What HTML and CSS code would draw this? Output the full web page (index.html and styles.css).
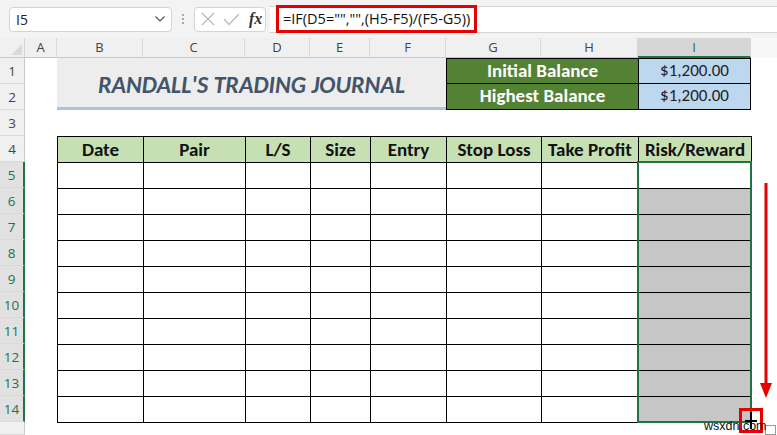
FILE: index.html
```html
<!DOCTYPE html>
<html>
	<head>
		<meta charset="UTF-8">
		<title>Randall's Trading Journal</title>
		<link rel="stylesheet" href="styles.css">
	</head>
	<body>
		<!-- formula bar -->
		<div class="toolbar">
			<div class="namebox">
				<span>I5</span>
				<svg width="10" height="6" viewBox="0 0 10 6"><polyline points="0.5,0.5 5,5 9.5,0.5" fill="none" stroke="#555" stroke-width="1.2"/></svg>
			</div>
			<div class="dots">
				<svg width="4" height="12" viewBox="0 0 4 12"><circle cx="2" cy="2" r="1.1" fill="#999"/><circle cx="2" cy="6" r="1.1" fill="#999"/><circle cx="2" cy="10" r="1.1" fill="#999"/></svg>
			</div>
			<div class="fxbox">
				<svg width="14" height="14" viewBox="0 0 14 14"><path d="M1 1 L13 13 M13 1 L1 13" stroke="#b8b8b8" stroke-width="1.2"/></svg>
				<svg width="17" height="13" viewBox="0 0 17 13"><polyline points="1,6 6,11.5 16,1" fill="none" stroke="#b8b8b8" stroke-width="1.2"/></svg>
				<span class="fx">fx</span>
			</div>
			<div class="formula">
				<div class="formula-text">=IF(D5="","",(H5-F5)/(F5-G5))</div>
			</div>
		</div>

		<div class="sheet">
			<div class="corner"><span class="corner-mark"></span></div>
			<div class="colheads">
				<div class="colhead" style="width:32px">A</div>
				<div class="colhead" style="width:86px">B</div>
				<div class="colhead" style="width:102px">C</div>
				<div class="colhead" style="width:65px">D</div>
				<div class="colhead" style="width:60px">E</div>
				<div class="colhead" style="width:76px">F</div>
				<div class="colhead" style="width:95px">G</div>
				<div class="colhead" style="width:97px">H</div>
				<div class="colhead active" style="width:113px">I</div>
				<div class="colhead rest"></div>
			</div>
			<div class="rowheads">
				<div class="rowhead">1</div>
				<div class="rowhead">2</div>
				<div class="rowhead">3</div>
				<div class="rowhead">4</div>
				<div class="rowhead active">5</div>
				<div class="rowhead active">6</div>
				<div class="rowhead active">7</div>
				<div class="rowhead active">8</div>
				<div class="rowhead active">9</div>
				<div class="rowhead active">10</div>
				<div class="rowhead active">11</div>
				<div class="rowhead active">12</div>
				<div class="rowhead active">13</div>
				<div class="rowhead active">14</div>
				<div class="rowhead rest"></div>
			</div>

			<div class="cells">
				<div class="title">RANDALL'S TRADING JOURNAL</div>
				<div class="bal-label first">Initial Balance</div>
				<div class="bal-label">Highest Balance</div>
				<div class="bal-value first">$1,200.00</div>
				<div class="bal-value second">$1,200.00</div>

				<table class="journal">
					<colgroup>
						<col style="width:86px"><col style="width:102px"><col style="width:65px"><col style="width:60px">
						<col style="width:76px"><col style="width:95px"><col style="width:97px"><col style="width:113px">
					</colgroup>
					<tr class="head">
						<th>Date</th><th>Pair</th><th>L/S</th><th>Size</th><th>Entry</th><th>Stop Loss</th><th>Take Profit</th><th>Risk/Reward</th>
					</tr>
					<tr><td></td><td></td><td></td><td></td><td></td><td></td><td></td><td></td></tr>
					<tr><td></td><td></td><td></td><td></td><td></td><td></td><td></td><td class="picked"></td></tr>
					<tr><td></td><td></td><td></td><td></td><td></td><td></td><td></td><td class="picked"></td></tr>
					<tr><td></td><td></td><td></td><td></td><td></td><td></td><td></td><td class="picked"></td></tr>
					<tr><td></td><td></td><td></td><td></td><td></td><td></td><td></td><td class="picked"></td></tr>
					<tr><td></td><td></td><td></td><td></td><td></td><td></td><td></td><td class="picked"></td></tr>
					<tr><td></td><td></td><td></td><td></td><td></td><td></td><td></td><td class="picked"></td></tr>
					<tr><td></td><td></td><td></td><td></td><td></td><td></td><td></td><td class="picked"></td></tr>
					<tr><td></td><td></td><td></td><td></td><td></td><td></td><td></td><td class="picked"></td></tr>
					<tr><td></td><td></td><td></td><td></td><td></td><td></td><td></td><td class="picked"></td></tr>
				</table>

				<div class="selection"></div>
			</div>
		</div>

		<!-- annotations drawn over the sheet -->
		<svg class="arrow" width="14" height="218" viewBox="0 0 14 218">
			<line x1="7" y1="0" x2="7" y2="204" stroke="#e60000" stroke-width="3"/>
			<polygon points="1,200 13,200 7,215" fill="#e60000"/>
		</svg>
		<div class="handle-box">
			<svg width="18" height="19" viewBox="0 0 18 19"><path d="M9 1 V18 M3 10 H15" stroke="#000" stroke-width="2"/></svg>
		</div>
		<div class="watermark">wsxdn.com</div>
		<div class="paste-icon"></div>
	</body>
</html>
```

FILE: styles.css
```css
*{
	margin: 0px;
	padding: 0px;
	box-sizing: border-box;
}
body{
	width: 777px;
	height: 435px;
	overflow: hidden;
	position: relative;
	background: #fff;
	font-family: "Open Sans", "Noto Sans", sans-serif;
}

/* formula bar */
.toolbar{
	height: 38px;
	background: #f3f3f3;
	display: flex;
	align-items: center;
	padding-left: 9px;
}
.namebox{
	width: 163px;
	height: 25px;
	background: #fff;
	border: 1px solid #d4d4d4;
	border-radius: 4px;
	display: flex;
	align-items: center;
	justify-content: space-between;
	padding: 0 6px 0 6px;
	font-size: 14px;
	color: #222;
}
.dots{
	width: 22px;
	display: flex;
	justify-content: center;
}
.fxbox{
	width: 72px;
	height: 25px;
	background: #fff;
	border: 1px solid #d4d4d4;
	border-radius: 4px;
	display: flex;
	align-items: center;
	gap: 8px;
	padding-left: 6px;
}
.fx{
	font-family: "Liberation Serif", serif;
	font-style: italic;
	font-weight: bold;
	font-size: 16px;
	color: #333;
	margin-left: 1px;
}
.formula{
	flex: 1;
	height: 27px;
	margin-left: 4px;
	background: #fff;
	border-top: 1px solid #d4d4d4;
	border-bottom: 1px solid #d4d4d4;
	display: flex;
	align-items: center;
}
.formula-text{
	width: 201px;
	height: 28px;
	margin-left: 6px;
	border: 3px solid #e60000;
	font-size: 14.5px;
	line-height: 22px;
	padding-left: 4px;
	color: #111;
	white-space: nowrap;
}

/* sheet frame */
.sheet{
	display: grid;
	grid-template-columns: 25px 1fr;
	grid-template-rows: 20px 1fr;
	height: 397px;
}
.corner{
	background: #f0f0f0;
	border-right: 1px solid #d4d4d4;
	border-bottom: 1px solid #c8c8c8;
	position: relative;
}
.corner-mark{
	position: absolute;
	right: 2px;
	bottom: 2px;
	border-left: 11px solid transparent;
	border-bottom: 11px solid #dadada;
}
.colheads{
	display: flex;
}
.colhead{
	height: 20px;
	background: #f0f0f0;
	border-right: 1px solid #d9d9d9;
	border-bottom: 1px solid #c8c8c8;
	text-align: center;
	font-size: 13px;
	line-height: 19px;
	color: #444;
}
.colhead.active{
	background: #d6d6d6;
	color: #217346;
	border-bottom: 2px solid #217346;
}
.colhead.rest{
	flex: 1;
	background: #f7f7f7;
	border-right: none;
	border-bottom: none;
}
.rowheads{
	display: flex;
	flex-direction: column;
}
.rowhead{
	height: 26px;
	background: #f0f0f0;
	border-right: 1px solid #c8c8c8;
	border-bottom: 1px solid #dadada;
	text-align: center;
	font-size: 13.5px;
	line-height: 26px;
	color: #444;
}
.rowhead.active{
	background: #e1e1e1;
	color: #217346;
	border-right: 2px solid #217346;
}
.rowhead.rest{
	flex: 1;
}

/* worksheet cells */
.cells{
	display: grid;
	grid-template-columns: 32px 86px 102px 65px 60px 76px 95px 97px 113px 1fr;
	grid-template-rows: repeat(14, 26px) 1fr;
	font-family: "Carlito", "Lato", sans-serif;
}
.title{
	grid-column: 2 / 7;
	grid-row: 1 / 3;
	background: #ededed;
	border-bottom: 3px solid #a9c4e2;
	display: flex;
	align-items: center;
	justify-content: center;
	font-size: 24px;
	font-weight: 900;
	font-style: italic;
	color: #44546a;
	padding-top: 4px;
}
.bal-label{
	grid-column: 7 / 9;
	grid-row: 2;
	background: #548235;
	color: #fff;
	font-weight: bold;
	font-size: 19px;
	text-align: center;
	line-height: 24px;
	border-left: 1px solid #000;
	border-bottom: 1px solid #000;
}
.bal-label.first{
	grid-row: 1;
	border-top: 1px solid #000;
	line-height: 24px;
}
.bal-value{
	grid-column: 9;
	background: #bdd7ee;
	color: #222;
	font-size: 17px;
	text-align: center;
	line-height: 24px;
	border-left: 1px solid #000;
	border-right: 1px solid #000;
	border-bottom: 1px solid #000;
}
.bal-value.first{
	grid-row: 1;
	border-top: 1px solid #000;
}
.bal-value.second{
	grid-row: 2;
}

.journal{
	grid-column: 2 / 10;
	grid-row: 4 / 15;
	border-collapse: collapse;
	table-layout: fixed;
	width: 694px;
}
.journal tr{
	height: 26px;
}
.journal th, .journal td{
	border: 1px solid #000;
	padding: 0;
}
.journal th{
	background: #c6e0b4;
	font-size: 19px;
	font-weight: bold;
	color: #111;
	text-align: center;
	white-space: nowrap;
}
.journal td.picked{
	background: #c6c6c6;
}
.selection{
	grid-column: 9;
	grid-row: 5 / 15;
	margin: -1px -1px -1px -1px;
	border: 2px solid #217346;
	position: relative;
	z-index: 1;
}

/* annotations */
.arrow{
	position: absolute;
	left: 759px;
	top: 183px;
}
.handle-box{
	position: absolute;
	left: 739px;
	top: 408px;
	width: 24px;
	height: 25px;
	border: 3px solid #e60000;
	display: flex;
	align-items: center;
	justify-content: center;
	z-index: 2;
}
.watermark{
	position: absolute;
	left: 704px;
	top: 419px;
	font-family: "Liberation Sans", sans-serif;
	font-size: 12.5px;
	color: #111;
	z-index: 3;
}
.paste-icon{
	position: absolute;
	left: 765px;
	top: 425px;
	width: 11px;
	height: 10px;
	border: 1px solid #999;
	background: #fff;
}
```
